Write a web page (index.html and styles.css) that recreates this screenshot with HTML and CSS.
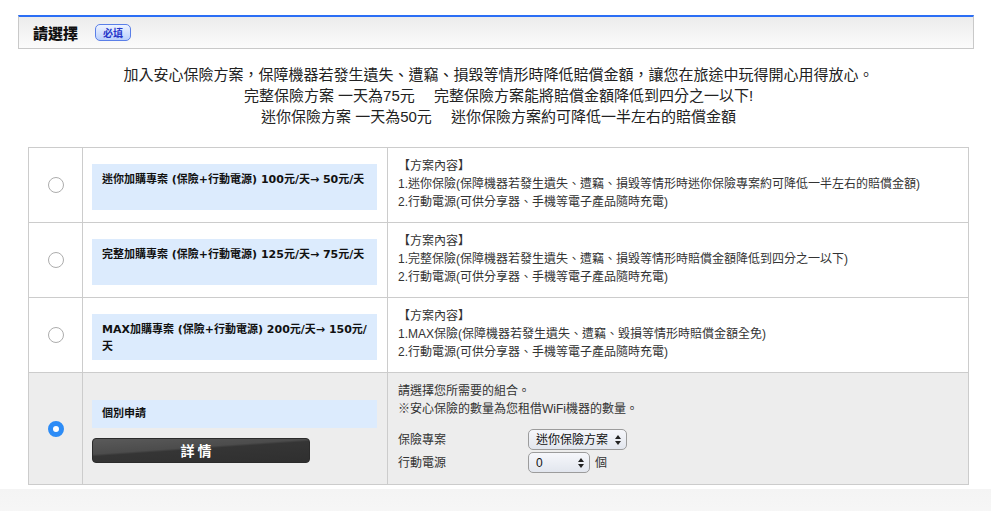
FILE: index.html
```html
<!DOCTYPE html>
<html lang="zh-Hant">
<head>
<meta charset="utf-8">
<title>請選擇</title>
<link rel="stylesheet" href="styles.css">
</head>
<body>
<div class="page">
  <div class="section-head">
    <h2 class="section-title">請選擇</h2>
    <span class="badge">必填</span>
  </div>

  <div class="intro">
    <p>加入安心保險方案，保障機器若發生遺失、遭竊、損毀等情形時降低賠償金額，讓您在旅途中玩得開心用得放心。</p>
    <p>完整保險方案 一天為75元　 完整保險方案能將賠償金額降低到四分之一以下!</p>
    <p>迷你保險方案 一天為50元　 迷你保險方案約可降低一半左右的賠償金額</p>
  </div>

  <table class="plans">
    <colgroup>
      <col class="c-radio">
      <col class="c-name">
      <col class="c-desc">
    </colgroup>
    <tr>
      <td class="col-radio"><input class="radio" type="radio" name="plan"></td>
      <td class="col-name"><div class="plan-name">迷你加購專案 (保險+行動電源) 100元/天→ 50元/天</div></td>
      <td class="col-desc">
        <div>【方案內容】</div>
        <div>1.迷你保險(保障機器若發生遺失、遭竊、損毀等情形時迷你保險專案約可降低一半左右的賠償金額)</div>
        <div>2.行動電源(可供分享器、手機等電子產品隨時充電)</div>
      </td>
    </tr>
    <tr>
      <td class="col-radio"><input class="radio" type="radio" name="plan"></td>
      <td class="col-name"><div class="plan-name">完整加購專案 (保險+行動電源) 125元/天→ 75元/天</div></td>
      <td class="col-desc">
        <div>【方案內容】</div>
        <div>1.完整保險(保障機器若發生遺失、遭竊、損毀等情形時賠償金額降低到四分之一以下)</div>
        <div>2.行動電源(可供分享器、手機等電子產品隨時充電)</div>
      </td>
    </tr>
    <tr>
      <td class="col-radio"><input class="radio" type="radio" name="plan"></td>
      <td class="col-name"><div class="plan-name">MAX加購專案 (保險+行動電源) 200元/天→ 150元/天</div></td>
      <td class="col-desc">
        <div>【方案內容】</div>
        <div>1.MAX保險(保障機器若發生遺失、遭竊、毀損等情形時賠償金額全免)</div>
        <div>2.行動電源(可供分享器、手機等電子產品隨時充電)</div>
      </td>
    </tr>
    <tr class="row-custom">
      <td class="col-radio"><input class="radio" type="radio" name="plan" checked></td>
      <td class="col-name col-name-custom">
        <div class="plan-name plan-name-single">個別申請</div>
        <button class="detail-btn" type="button">詳 情</button>
      </td>
      <td class="col-desc">
        <div>請選擇您所需要的組合。</div>
        <div>※安心保險的數量為您租借WiFi機器的數量。</div>
        <div class="custom-form">
          <span class="form-label">保險專案</span>
          <span class="form-field">
            <span class="select select-plan">
              <select>
                <option>迷你保險方案</option>
                <option>完整保險方案</option>
                <option>MAX保險方案</option>
              </select>
              <svg class="select-arrows" width="6" height="10" viewBox="0 0 6 10"><path d="M3 0 L6 4 L0 4 Z M0 6 L6 6 L3 10 Z" fill="#222"/></svg>
            </span>
          </span>
          <span class="form-label">行動電源</span>
          <span class="form-field">
            <span class="select select-qty">
              <select>
                <option>0</option>
                <option>1</option>
                <option>2</option>
              </select>
              <svg class="select-arrows" width="6" height="10" viewBox="0 0 6 10"><path d="M3 0 L6 4 L0 4 Z M0 6 L6 6 L3 10 Z" fill="#222"/></svg>
            </span>
            <span class="unit">個</span>
          </span>
        </div>
      </td>
    </tr>
  </table>
</div>
<div class="footer-band"></div>
</body>
</html>
```

FILE: styles.css
```css
* {
  box-sizing: border-box;
}

html,
body {
  margin: 0;
  padding: 0;
  background: #fff;
}

body {
  font-family: "Liberation Sans", "Noto Sans CJK TC", sans-serif;
  color: #222;
}

.page {
  padding-top: 15px;
}

/* header bar */
.section-head {
  margin: 0 17px 0 18px;
  height: 34px;
  border: 1px solid #c9c9c9;
  border-top: 2px solid #2b6ef5;
  background: linear-gradient(#ececec, #fbfbfb);
  display: flex;
  align-items: center;
  padding-left: 14px;
  gap: 17px;
}

.section-title {
  margin: 0;
  font-family: "Noto Sans CJK TC", sans-serif;
  font-size: 15px;
  font-weight: 900;
  color: #111;
  line-height: 1;
}

.badge {
  display: inline-flex;
  align-items: center;
  justify-content: center;
  width: 36px;
  height: 17px;
  border: 1px solid #5a7fe8;
  border-radius: 5px;
  background: linear-gradient(#eef3ff, #b9cffc);
  color: #2636c9;
  font-family: "Noto Sans CJK TC", sans-serif;
  font-size: 10px;
  font-weight: bold;
  line-height: 1;
}

/* intro */
.intro {
  margin: 0 22px 0 28px;
  padding-top: 15px;
  text-align: center;
}

.intro p {
  margin: 0;
  font-size: 15px;
  line-height: 21px;
  color: #222;
}

/* table */
.plans {
  margin: 20px 0 0 28px;
  width: 941px;
  border-collapse: collapse;
  table-layout: fixed;
}

.c-radio {
  width: 54px;
}

.c-name {
  width: 305px;
}

.plans td {
  border: 1px solid #cccccc;
}

.col-radio {
  vertical-align: middle;
  text-align: center;
  padding: 0;
}

.radio {
  -webkit-appearance: none;
  appearance: none;
  display: block;
  width: 16px;
  height: 16px;
  margin: 0 auto;
  border-radius: 50%;
  border: 1px solid #adadad;
  background: #fff;
}

.radio:checked {
  border: 5px solid #2d8cf6;
  background: #fff;
}

.col-name {
  vertical-align: top;
  padding: 16px 10px 0 9px;
}

.plan-name {
  height: 46px;
  padding: 7px 8px 0 10px;
  background: #dcebfd;
  font-family: "DejaVu Sans", "Noto Sans CJK TC", sans-serif;
  font-size: 11px;
  font-weight: bold;
  line-height: 17px;
  color: #111;
}

.col-name-custom {
  padding-top: 27px;
}

.plan-name-single {
  height: 28px;
  padding-top: 0;
  line-height: 28px;
}

.detail-btn {
  display: block;
  width: 218px;
  height: 25px;
  margin: 10px 0 0;
  padding: 0 10px 0 0;
  border: 1px solid #2b2b2b;
  border-radius: 4px;
  background: linear-gradient(176deg, #5a5a5a 0%, #4c4c4c 40%, #353535 46%, #2f2f2f 100%);
  color: #fff;
  font-family: "Noto Sans CJK TC", sans-serif;
  font-size: 14px;
  font-weight: bold;
  line-height: 23px;
  text-align: center;
}

.col-desc {
  vertical-align: top;
  padding: 9px 10px 11px;
  font-size: 12px;
  line-height: 18px;
  color: #333;
}

.row-custom td {
  background: #ededed;
}

/* custom form */
.custom-form {
  display: grid;
  grid-template-columns: 130px auto;
  row-gap: 2px;
  align-items: center;
  margin-top: 11px;
}

.form-label {
  color: #333;
}

.form-field {
  display: flex;
  align-items: center;
  gap: 5px;
}

.select {
  position: relative;
  display: inline-block;
}

.select select {
  -webkit-appearance: none;
  appearance: none;
  display: block;
  height: 21px;
  margin: 0;
  padding: 0 18px 0 7px;
  border: 1px solid #9c9c9c;
  border-radius: 5px;
  background: linear-gradient(#f6f7fb, #e2e6ee);
  font-family: "Liberation Sans", "Noto Sans CJK TC", sans-serif;
  font-size: 12px;
  color: #111;
}

.select-plan select {
  width: 99px;
}

.select-qty select {
  width: 62px;
}

.select-arrows {
  position: absolute;
  right: 6px;
  top: 6px;
  pointer-events: none;
}

.unit {
  color: #333;
}

.footer-band {
  margin-top: 4px;
  height: 40px;
  background: linear-gradient(#f4f4f4, #f8f8f8);
}
```
